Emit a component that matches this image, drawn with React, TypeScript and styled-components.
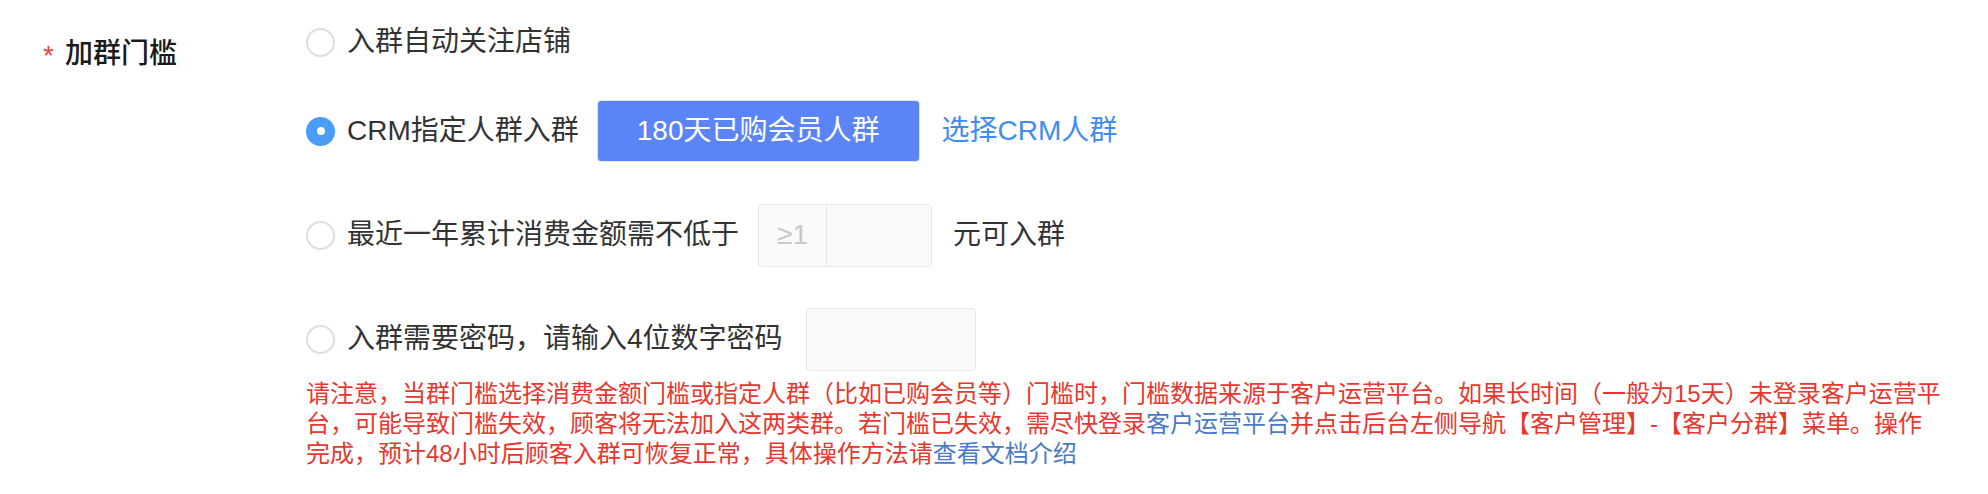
import React from "react";
import styled, { createGlobalStyle } from "styled-components";

const GlobalStyle = createGlobalStyle`
  html, body {
    margin: 0;
    padding: 0;
    background: #ffffff;
  }
  body {
    font-family: "Liberation Sans", "Noto Sans CJK SC", sans-serif;
    color: #333333;
  }
`;

const Form = styled.div`
  display: flex;
  align-items: flex-start;
  width: 1988px;
  height: 494px;
  box-sizing: border-box;
`;

const LabelCol = styled.div`
  width: 306px;
  flex: none;
  box-sizing: border-box;
  padding-left: 43px;
  padding-top: 40px;
  display: flex;
  align-items: center;
  font-size: 28px;
  line-height: 28px;
`;

const Required = styled.span`
  color: #e5473d;
  margin-right: 11px;
  font-size: 28px;
  position: relative;
  top: 2px;
`;

const LabelText = styled.span`
  color: #1a1a1a;
  font-weight: 500;
`;

const Options = styled.div`
  display: flex;
  flex-direction: column;
  padding-top: 26px;
`;

const RadioGroup = styled.div`
  display: flex;
  flex-direction: column;
  gap: 42px;
`;

const Row = styled.div<{ $h: number }>`
  display: flex;
  align-items: center;
  height: ${(p) => p.$h}px;
  font-size: 28px;
  line-height: 28px;
  color: #333333;
`;

const Radio = styled.span<{ $checked?: boolean }>`
  width: 29px;
  height: 29px;
  border-radius: 50%;
  box-sizing: border-box;
  flex: none;
  margin-right: 12px;
  display: flex;
  align-items: center;
  justify-content: center;
  border: ${(p) => (p.$checked ? "none" : "2px solid #dedede")};
  background: ${(p) => (p.$checked ? "#4b9cf6" : "#ffffff")};
  &::after {
    content: "";
    display: ${(p) => (p.$checked ? "block" : "none")};
    width: 8px;
    height: 8px;
    border-radius: 50%;
    background: #ffffff;
  }
`;

const OptionText = styled.span`
  white-space: nowrap;
`;

const CrowdButton = styled.button`
  margin-left: 18px;
  height: 62px;
  padding: 0 39px;
  box-sizing: border-box;
  border: 1px solid #e6e6e6;
  border-radius: 4px;
  background: #5b84f7;
  color: #ffffff;
  font-family: inherit;
  font-size: 28px;
  line-height: 28px;
  white-space: nowrap;
  cursor: pointer;
`;

const SelectLink = styled.a`
  margin-left: 22px;
  color: #3e8cf4;
  text-decoration: none;
  white-space: nowrap;
  cursor: pointer;
`;

const InputGroup = styled.div`
  margin-left: 19px;
  display: flex;
  width: 174px;
  height: 63px;
  box-sizing: border-box;
  border: 1px solid #e8e8e8;
  border-radius: 4px;
  background: #fafafa;
  overflow: hidden;
`;

const Prefix = styled.span`
  width: 68px;
  flex: none;
  box-sizing: border-box;
  border-right: 1px solid #e6e6e6;
  display: flex;
  align-items: center;
  justify-content: center;
  color: #c9c9c9;
  font-size: 28px;
`;

const GroupInput = styled.input`
  flex: 1;
  min-width: 0;
  border: none;
  outline: none;
  background: transparent;
  font-family: inherit;
  font-size: 24px;
`;

const Suffix = styled.span`
  margin-left: 21px;
  white-space: nowrap;
`;

const PlainInput = styled.input<{ $ml: number }>`
  margin-left: ${(p) => p.$ml}px;
  width: 170px;
  height: 63px;
  box-sizing: border-box;
  border: 1px solid #e8e8e8;
  border-radius: 4px;
  background: #fafafa;
  outline: none;
  font-family: inherit;
  font-size: 24px;
`;

const Notice = styled.p`
  margin: 9px 0 0 0;
  font-size: 24px;
  line-height: 30px;
  color: #e8372e;
  white-space: nowrap;
`;

const NoticeLink = styled.a`
  color: #4b79c9;
  text-decoration: none;
  cursor: pointer;
`;

export default function App() {
  return (
    <>
      <GlobalStyle />
      <Form>
        <LabelCol>
          <Required>*</Required>
          <LabelText>加群门槛</LabelText>
        </LabelCol>
        <Options>
          <RadioGroup>
            <Row $h={32}>
              <Radio />
              <OptionText>入群自动关注店铺</OptionText>
            </Row>
            <Row $h={62}>
              <Radio $checked />
              <OptionText>CRM指定人群入群</OptionText>
              <CrowdButton>180天已购会员人群</CrowdButton>
              <SelectLink>选择CRM人群</SelectLink>
            </Row>
            <Row $h={62}>
              <Radio />
              <OptionText>最近一年累计消费金额需不低于</OptionText>
              <InputGroup>
                <Prefix>≥1</Prefix>
                <GroupInput />
              </InputGroup>
              <Suffix>元可入群</Suffix>
            </Row>
            <Row $h={62}>
              <Radio />
              <OptionText>入群需要密码，请输入4位数字密码</OptionText>
              <PlainInput $ml={23} />
            </Row>
          </RadioGroup>
          <Notice>
            请注意，当群门槛选择消费金额门槛或指定人群（比如已购会员等）门槛时，门槛数据来源于客户运营平台。如果长时间（一般为15天）未登录客户运营平
            <br />
            台，可能导致门槛失效，顾客将无法加入这两类群。若门槛已失效，需尽快登录
            <NoticeLink>客户运营平台</NoticeLink>
            并点击后台左侧导航【客户管理】-【客户分群】菜单。操作
            <br />
            完成，预计48小时后顾客入群可恢复正常，具体操作方法请
            <NoticeLink>查看文档介绍</NoticeLink>
          </Notice>
        </Options>
      </Form>
    </>
  );
}
